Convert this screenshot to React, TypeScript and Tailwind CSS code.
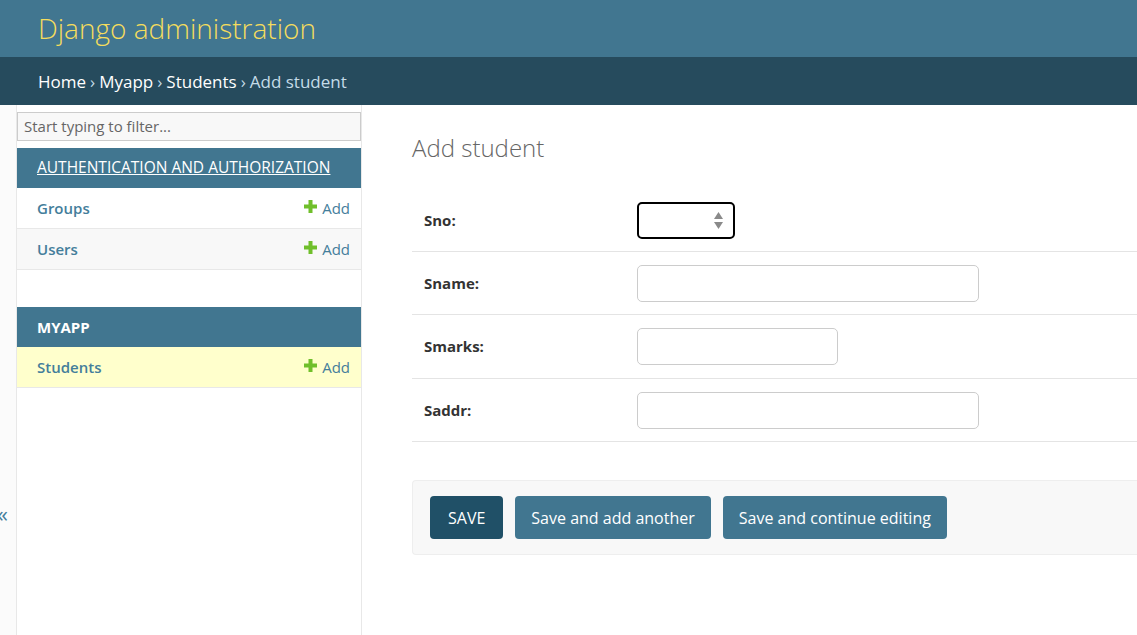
const font = { fontFamily: '"Open Sans", "Noto Sans", sans-serif' };

function AddLink() {
  return (
    <span className="flex items-center gap-[5px] text-[15px] text-[#447e9b]">
      <svg width="13" height="13" viewBox="0 0 13 13" className="-mt-[4px]">
        <rect x="4.5" y="0" width="4" height="13" fill="#70bf2b" />
        <rect x="0" y="4.5" width="13" height="4" fill="#70bf2b" />
      </svg>
      Add
    </span>
  );
}

function ModelRow({ name, bg }: { name: string; bg: string }) {
  return (
    <div className={`flex h-[41px] items-center justify-between border-b border-[#e8e8e8] pl-[20px] pr-[11px] ${bg}`}>
      <span className="text-[15px] font-semibold text-[#447e9b]">{name}</span>
      <AddLink />
    </div>
  );
}

function FormRow({ label, width, height, focused }: { label: string; width: string; height: string; focused?: boolean }) {
  return (
    <div className={`flex ${height} items-center border-b border-[#e4e4e4]`}>
      <label className="w-[225px] pl-[12px] text-[15px] font-bold text-[#333]">{label}</label>
      {focused ? (
        <div className={`flex h-[37px] ${width} items-center justify-end rounded-[5px] border-2 border-black pr-[10px]`}>
          <div className="flex flex-col gap-[3px]">
            <svg width="9" height="7" viewBox="0 0 9 7"><path d="M4.5 0 L9 7 L0 7 Z" fill="#8a8a8a" /></svg>
            <svg width="9" height="7" viewBox="0 0 9 7"><path d="M0 0 L9 0 L4.5 7 Z" fill="#8a8a8a" /></svg>
          </div>
        </div>
      ) : (
        <div className={`h-[37px] ${width} rounded-[5px] border border-[#cccccc] bg-white`} />
      )}
    </div>
  );
}

export default function App() {
  return (
    <div className="flex h-[635px] w-[1137px] flex-col overflow-hidden bg-white" style={font}>
      <div className="flex h-[57px] shrink-0 items-start bg-[#417690] pl-[38px] pt-[7px]">
        <h1 className="text-[28px] font-light text-[#f5dd5d]">Django administration</h1>
      </div>
      <div className="flex h-[48px] shrink-0 items-center bg-[#264b5d] pl-[38px] pt-[2px] text-[17px]">
        <span className="text-white">Home</span>
        <span className="mx-[4px] text-[#c4dce8]">›</span>
        <span className="text-white">Myapp</span>
        <span className="mx-[4px] text-[#c4dce8]">›</span>
        <span className="text-white">Students</span>
        <span className="mx-[4px] text-[#c4dce8]">›</span>
        <span className="text-[#c4dce8]">Add student</span>
      </div>

      <div className="flex flex-1">
        <div className="w-[17px] shrink-0 overflow-hidden border-r border-[#e8e8e8] bg-[#fbfbfb] pt-[397px]">
          <span className="-ml-[3px] block text-[22px] leading-none text-[#447e9b]">«</span>
        </div>

        <div className="w-[345px] shrink-0 border-r border-[#e8e8e8] pt-[7px]">
          <div className="mb-[7px] flex h-[29px] items-center border border-[#cccccc] bg-[#f8f8f8] pl-[6px] text-[15px] text-[#666]">
            Start typing to filter...
          </div>
          <div className="flex h-[40px] items-center bg-[#417690] pl-[20px]">
            <span className="text-[15.5px] text-white underline">AUTHENTICATION AND AUTHORIZATION</span>
          </div>
          <ModelRow name="Groups" bg="bg-white" />
          <ModelRow name="Users" bg="bg-[#f8f8f8]" />
          <div className="h-[37px]" />
          <div className="flex h-[40px] items-center bg-[#417690] pl-[20px]">
            <span className="text-[15px] font-bold text-white">MYAPP</span>
          </div>
          <ModelRow name="Students" bg="bg-[#ffffcc]" />
        </div>

        <div className="flex-1 pl-[50px]">
          <h2 className="mt-[25px] h-[59px] text-[24px] font-light text-[#666]">Add student</h2>
          <div>
            <FormRow label="Sno:" width="w-[98px]" height="h-[63px]" focused />
            <FormRow label="Sname:" width="w-[342px]" height="h-[63px]" />
            <FormRow label="Smarks:" width="w-[201px]" height="h-[64px]" />
            <FormRow label="Saddr:" width="w-[342px]" height="h-[63px]" />
          </div>
          <div className="mt-[38px] flex h-[75px] items-center gap-[12px] rounded-l-[4px] border border-r-0 border-[#eeeeee] bg-[#f8f8f8] pl-[17px]">
            <button className="h-[43px] rounded-[4px] bg-[#205067] px-[18px] text-[16px] text-white">SAVE</button>
            <button className="h-[43px] rounded-[4px] bg-[#417690] px-[16px] text-[16px] text-white">Save and add another</button>
            <button className="h-[43px] rounded-[4px] bg-[#417690] px-[16px] text-[16px] text-white">Save and continue editing</button>
          </div>
        </div>
      </div>
    </div>
  );
}
